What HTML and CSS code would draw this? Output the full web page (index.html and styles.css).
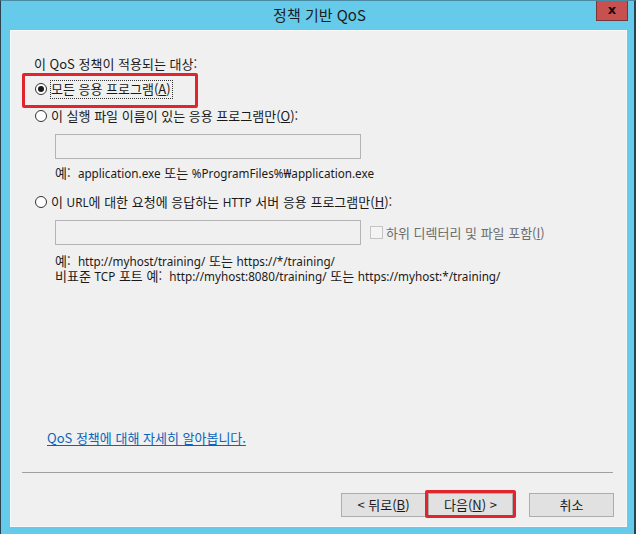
FILE: index.html
```html
<!DOCTYPE html>
<html lang="ko">
<head>
<meta charset="utf-8">
<title>정책 기반 QoS</title>
<link rel="stylesheet" href="styles.css">
</head>
<body>
<div class="window">
  <div class="titlebar">
    <div class="title">정책 기반 QoS</div>
    <div class="close">x</div>
  </div>
  <div class="panel">
    <div class="content">
      <p class="heading">이 QoS 정책이 적용되는 대상:</p>
      <div class="radio-row first">
        <span class="radio checked"></span>
        <span class="focus">모든 응용 프로그램(<u>A</u>)</span>
      </div>
      <div class="radio-row">
        <span class="radio"></span>
        <span class="label">이 실행 파일 이름이 있는 응용 프로그램만(<u>O</u>):</span>
      </div>
      <div class="input input-one"></div>
      <p class="example ex-one">예:&nbsp; <span class="lat">application.exe</span> 또는 <span class="lat">%ProgramFiles%₩application.exe</span></p>
      <div class="radio-row third">
        <span class="radio"></span>
        <span class="label">이 <span class="lat">URL</span>에 대한 요청에 응답하는 <span class="lat">HTTP</span> 서버 응용 프로그램만(<u>H</u>):</span>
      </div>
      <div class="url-row">
        <div class="input"></div>
        <span class="checkbox"></span>
        <span class="check-label">하위 디렉터리 및 파일 포함(<u>I</u>)</span>
      </div>
      <div class="example ex-two">
        <p>예:&nbsp; <span class="lat">http://myhost/training/</span> 또는 <span class="lat">https://*/training/</span></p>
        <p>비표준 <span class="lat">TCP</span> 포트 예:&nbsp; <span class="lat">http://myhost:8080/training/</span> 또는 <span class="lat">https://myhost:*/training/</span></p>
      </div>
    </div>
    <div class="link-area"><a class="link" href="#">QoS 정책에 대해 자세히 알아봅니다.</a></div>
    <div class="separator"></div>
    <div class="buttons">
      <div class="btn">&lt; 뒤로(<u>B</u>)</div>
      <div class="btn next">다음(<u>N</u>) &gt;</div>
      <div class="btn cancel">취소</div>
    </div>
  </div>
</div>
</body>
</html>
```
FILE: styles.css
```css
* { box-sizing: border-box; }
html, body { margin: 0; padding: 0; }
body {
  width: 636px;
  height: 534px;
  overflow: hidden;
  background: #24323b;
  font-family: "Noto Sans CJK KR", "Noto Sans", sans-serif;
  font-size: 13px;
  color: #1a1a1a;
}
p { margin: 0; }
u { text-decoration: underline; text-underline-offset: 1px; }
.lat {
  font-family: "Noto Sans", sans-serif;
  font-size: 11.7px;
  line-height: 0;
}

.window {
  width: 636px;
  height: 534px;
  background: #66cbea;
  border-left: 1px solid #2b4350;
  border-right: 2px solid #2b4350;
  border-top: 1px solid #4a8aa3;
  padding: 0 7px 7px 9px;
  display: flex;
  flex-direction: column;
}

.titlebar {
  height: 29px;
  display: flex;
  align-items: flex-start;
}
.title {
  flex: 1;
  text-align: center;
  padding-left: 33px;
  padding-top: 4px;
  font-size: 15px;
  line-height: 20px;
  color: #1c1c1c;
}
.close {
  width: 32px;
  height: 20px;
  margin-right: -1px;
  background: #c75050;
  border: 1px solid #7a3434;
  border-top: none;
  color: #111;
  font-family: "DejaVu Sans", sans-serif;
  font-weight: bold;
  font-size: 13px;
  line-height: 17px;
  text-align: center;
}

.panel {
  flex: 1;
  background: #f0f0f0;
  border: 1px solid #f8f8f8;
  display: flex;
  flex-direction: column;
  padding-bottom: 9px;
}

.content {
  flex: 1;
  padding: 25px 0 0 23px;
}
.heading { line-height: 16px; }

.radio-row {
  display: flex;
  align-items: center;
  height: 18px;
  margin-top: 9px;
  padding-left: 1px;
  position: relative;
}
.radio-row.first { margin-top: 8px; }
.radio-row.first::after {
  content: "";
  position: absolute;
  left: -12px;
  top: -7px;
  width: 170px;
  height: 29px;
  border: 3px solid #e1252e;
  border-radius: 2px;
}
.radio-row.third { margin-top: 12px; }
.radio {
  width: 12px;
  height: 12px;
  border-radius: 50%;
  border: 1px solid #333;
  background: #fff;
  margin-right: 4px;
  flex: none;
  display: flex;
  align-items: center;
  justify-content: center;
}
.radio.checked::before {
  content: "";
  width: 6px;
  height: 6px;
  border-radius: 50%;
  background: #1a1a1a;
}
.focus {
  border: 1px dotted #333;
  padding: 0 1px 1px 0;
  margin-left: -1px;
  line-height: 16px;
}
.label { line-height: 16px; }

.input {
  width: 306px;
  height: 25px;
  border: 1px solid #b4b4b4;
  background: #f0f0f0;
  flex: none;
}
.input-one { margin: 9px 0 0 21px; }
.ex-one { margin: 6px 0 0 21px; line-height: 16px; }

.url-row {
  display: flex;
  align-items: center;
  margin: 9px 0 0 21px;
}
.checkbox {
  width: 13px;
  height: 13px;
  border: 1px solid #c4c4c4;
  background: #f4f4f4;
  margin-left: 9px;
  margin-right: 3px;
}
.check-label { color: #6d6d6d; line-height: 16px; }

.ex-two { margin: 8px 0 0 21px; line-height: 15px; }

.link-area { padding-left: 36px; line-height: 16px; }
.link { color: #0a64b9; text-decoration: underline; text-underline-offset: 2px; }

.separator {
  height: 1px;
  background: #a0a0a0;
  margin: 26px 13px 0 11px;
}

.buttons {
  display: flex;
  justify-content: flex-end;
  margin-top: 20px;
  padding-right: 12px;
}
.btn {
  width: 85px;
  height: 24px;
  background: #e1e1e1;
  border: 1px solid #adadad;
  text-align: center;
  line-height: 21px;
  position: relative;
}
.btn.next { margin-left: 2px; }
.btn.next::after {
  content: "";
  position: absolute;
  left: -4px;
  right: -4px;
  top: -4px;
  bottom: -2px;
  border: 3px solid #e1252e;
  border-radius: 2px;
}
.btn.cancel { margin-left: 16px; }
```
